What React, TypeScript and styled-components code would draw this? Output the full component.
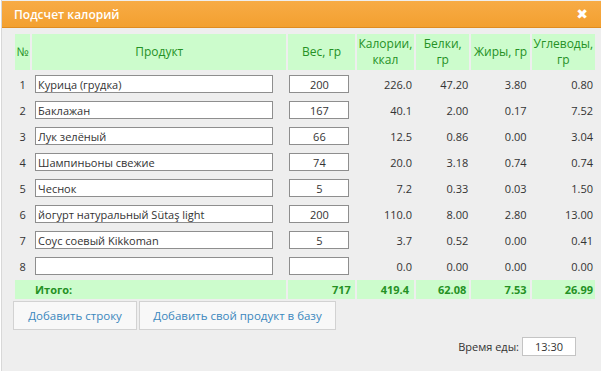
import React from "react";
import styled, { createGlobalStyle } from "styled-components";

const Global = createGlobalStyle`
  html, body { margin: 0; padding: 0; background: #ffffff; }
  body { font-family: "Open Sans", "DejaVu Sans", sans-serif; }
  input { font-family: inherit; }
`;

const Dialog = styled.div`
  width: 600px;
  height: 371px;
  margin-left: 1px;
  background: #eeeeee;
  box-sizing: border-box;
  border-left: 1px solid #d8d8d8;
  display: flex;
  flex-direction: column;
`;

const TitleBar = styled.div`
  height: 26px;
  margin-top: 1px;
  background: linear-gradient(#f7ab45, #f3a030);
  border-bottom: 1px solid #e08c20;
  display: flex;
  align-items: center;
  justify-content: space-between;
  padding: 0 13px 0 12px;
  color: #ffffff;
  font-size: 12px;
  font-weight: 600;
`;

const Close = styled.span`
  font-size: 14px;
  font-weight: 700;
  line-height: 1;
  color: #fff;
`;

const Body = styled.div`
  padding: 4px 0 0 11px;
  display: flex;
  flex-direction: column;
`;

const Table = styled.table`
  border-collapse: separate;
  border-spacing: 2px;
  table-layout: fixed;
  width: 584px;
  font-size: 11px;
  color: #333;
`;

const Th = styled.th`
  background: #ccfccc;
  color: #259125;
  font-weight: 400;
  font-size: 12px;
  line-height: 16px;
  height: 36px;
  padding: 0;
  text-align: center;
  vertical-align: middle;
`;

const Td = styled.td<{ $align?: string; $pr?: number }>`
  height: 24px;
  padding: 0 ${(p) => p.$pr ?? 0}px 0 0;
  text-align: ${(p) => p.$align || "left"};
  vertical-align: middle;
  white-space: nowrap;
`;

const TotalTd = styled.td<{ $align?: string; $pr?: number; $pl?: number }>`
  height: 19px;
  background: #ccfccc;
  color: #259125;
  font-weight: 700;
  padding: 0 ${(p) => p.$pr ?? 0}px 0 ${(p) => p.$pl ?? 0}px;
  text-align: ${(p) => p.$align || "left"};
  vertical-align: middle;
`;

const TextInput = styled.input<{ $w: number; $ml: number; $center?: boolean }>`
  box-sizing: border-box;
  width: ${(p) => p.$w}px;
  height: 18px;
  margin-left: ${(p) => p.$ml}px;
  border: 1px solid #8e8e8e;
  background: #fff;
  font-size: 11px;
  color: #333;
  padding: 0 2px;
  text-align: ${(p) => (p.$center ? "center" : "left")};
  display: block;
`;

const Buttons = styled.div`
  display: flex;
  gap: 2px;
`;

const Button = styled.button<{ $w: number }>`
  width: ${(p) => p.$w}px;
  height: 29px;
  border: 1px solid #d2d2d2;
  background: #f8f8f8;
  color: #3a87bd;
  font-family: "Open Sans", sans-serif;
  font-size: 11.5px;
  padding: 0;
  cursor: pointer;
`;

const TimeRow = styled.div`
  display: flex;
  justify-content: flex-end;
  align-items: center;
  gap: 3px;
  margin-top: 7px;
  padding-right: 25px;
  font-size: 11px;
  color: #333;
`;

const TimeInput = styled.input`
  box-sizing: border-box;
  width: 54px;
  height: 19px;
  border: 1px solid #c4c4c4;
  background: #fff;
  text-align: center;
  font-size: 11px;
  color: #333;
`;

type Row = { n: number; name: string; w: string; cal: string; p: string; f: string; c: string };

const rows: Row[] = [
  { n: 1, name: "Курица (грудка)", w: "200", cal: "226.0", p: "47.20", f: "3.80", c: "0.80" },
  { n: 2, name: "Баклажан", w: "167", cal: "40.1", p: "2.00", f: "0.17", c: "7.52" },
  { n: 3, name: "Лук зелёный", w: "66", cal: "12.5", p: "0.86", f: "0.00", c: "3.04" },
  { n: 4, name: "Шампиньоны свежие", w: "74", cal: "20.0", p: "3.18", f: "0.74", c: "0.74" },
  { n: 5, name: "Чеснок", w: "5", cal: "7.2", p: "0.33", f: "0.03", c: "1.50" },
  { n: 6, name: "йогурт натуральный Sütaş light", w: "200", cal: "110.0", p: "8.00", f: "2.80", c: "13.00" },
  { n: 7, name: "Соус соевый Kikkoman", w: "5", cal: "3.7", p: "0.52", f: "0.00", c: "0.41" },
  { n: 8, name: "", w: "", cal: "0.0", p: "0.00", f: "0.00", c: "0.00" },
];

export default function App() {
  return (
    <>
      <Global />
      <Dialog>
        <TitleBar>
          <span>Подсчет калорий</span>
          <Close>✖</Close>
        </TitleBar>
        <Body>
          <Table>
            <colgroup>
              <col style={{ width: 15 }} />
              <col style={{ width: 253 }} />
              <col style={{ width: 66 }} />
              <col style={{ width: 57 }} />
              <col style={{ width: 53 }} />
              <col style={{ width: 58 }} />
              <col style={{ width: 63 }} />
            </colgroup>
            <thead>
              <tr>
                <Th>№</Th>
                <Th>Продукт</Th>
                <Th>Вес, гр</Th>
                <Th>Калории,<br />ккал</Th>
                <Th>Белки,<br />гр</Th>
                <Th>Жиры, гр</Th>
                <Th>Углеводы,<br />гр</Th>
              </tr>
            </thead>
            <tbody>
              {rows.map((r) => (
                <tr key={r.n}>
                  <Td $align="center">{r.n}</Td>
                  <Td>
                    <TextInput $w={238} $ml={3} defaultValue={r.name} />
                  </Td>
                  <Td>
                    <TextInput $w={60} $ml={1} $center defaultValue={r.w} />
                  </Td>
                  <Td $align="right" $pr={2}>{r.cal}</Td>
                  <Td $align="right" $pr={1}>{r.p}</Td>
                  <Td $align="right" $pr={3}>{r.f}</Td>
                  <Td $align="right" $pr={2}>{r.c}</Td>
                </tr>
              ))}
              <tr>
                <TotalTd colSpan={2} $pl={20}>Итого:</TotalTd>
                <TotalTd $align="right" $pr={4}>717</TotalTd>
                <TotalTd $align="right" $pr={5}>419.4</TotalTd>
                <TotalTd $align="right" $pr={3}>62.08</TotalTd>
                <TotalTd $align="right" $pr={3}>7.53</TotalTd>
                <TotalTd $align="right" $pr={2}>26.99</TotalTd>
              </tr>
            </tbody>
          </Table>
          <Buttons>
            <Button $w={124}>Добавить строку</Button>
            <Button $w={197}>Добавить свой продукт в базу</Button>
          </Buttons>
          <TimeRow>
            <span>Время еды:</span>
            <TimeInput defaultValue="13:30" />
          </TimeRow>
        </Body>
      </Dialog>
    </>
  );
}
